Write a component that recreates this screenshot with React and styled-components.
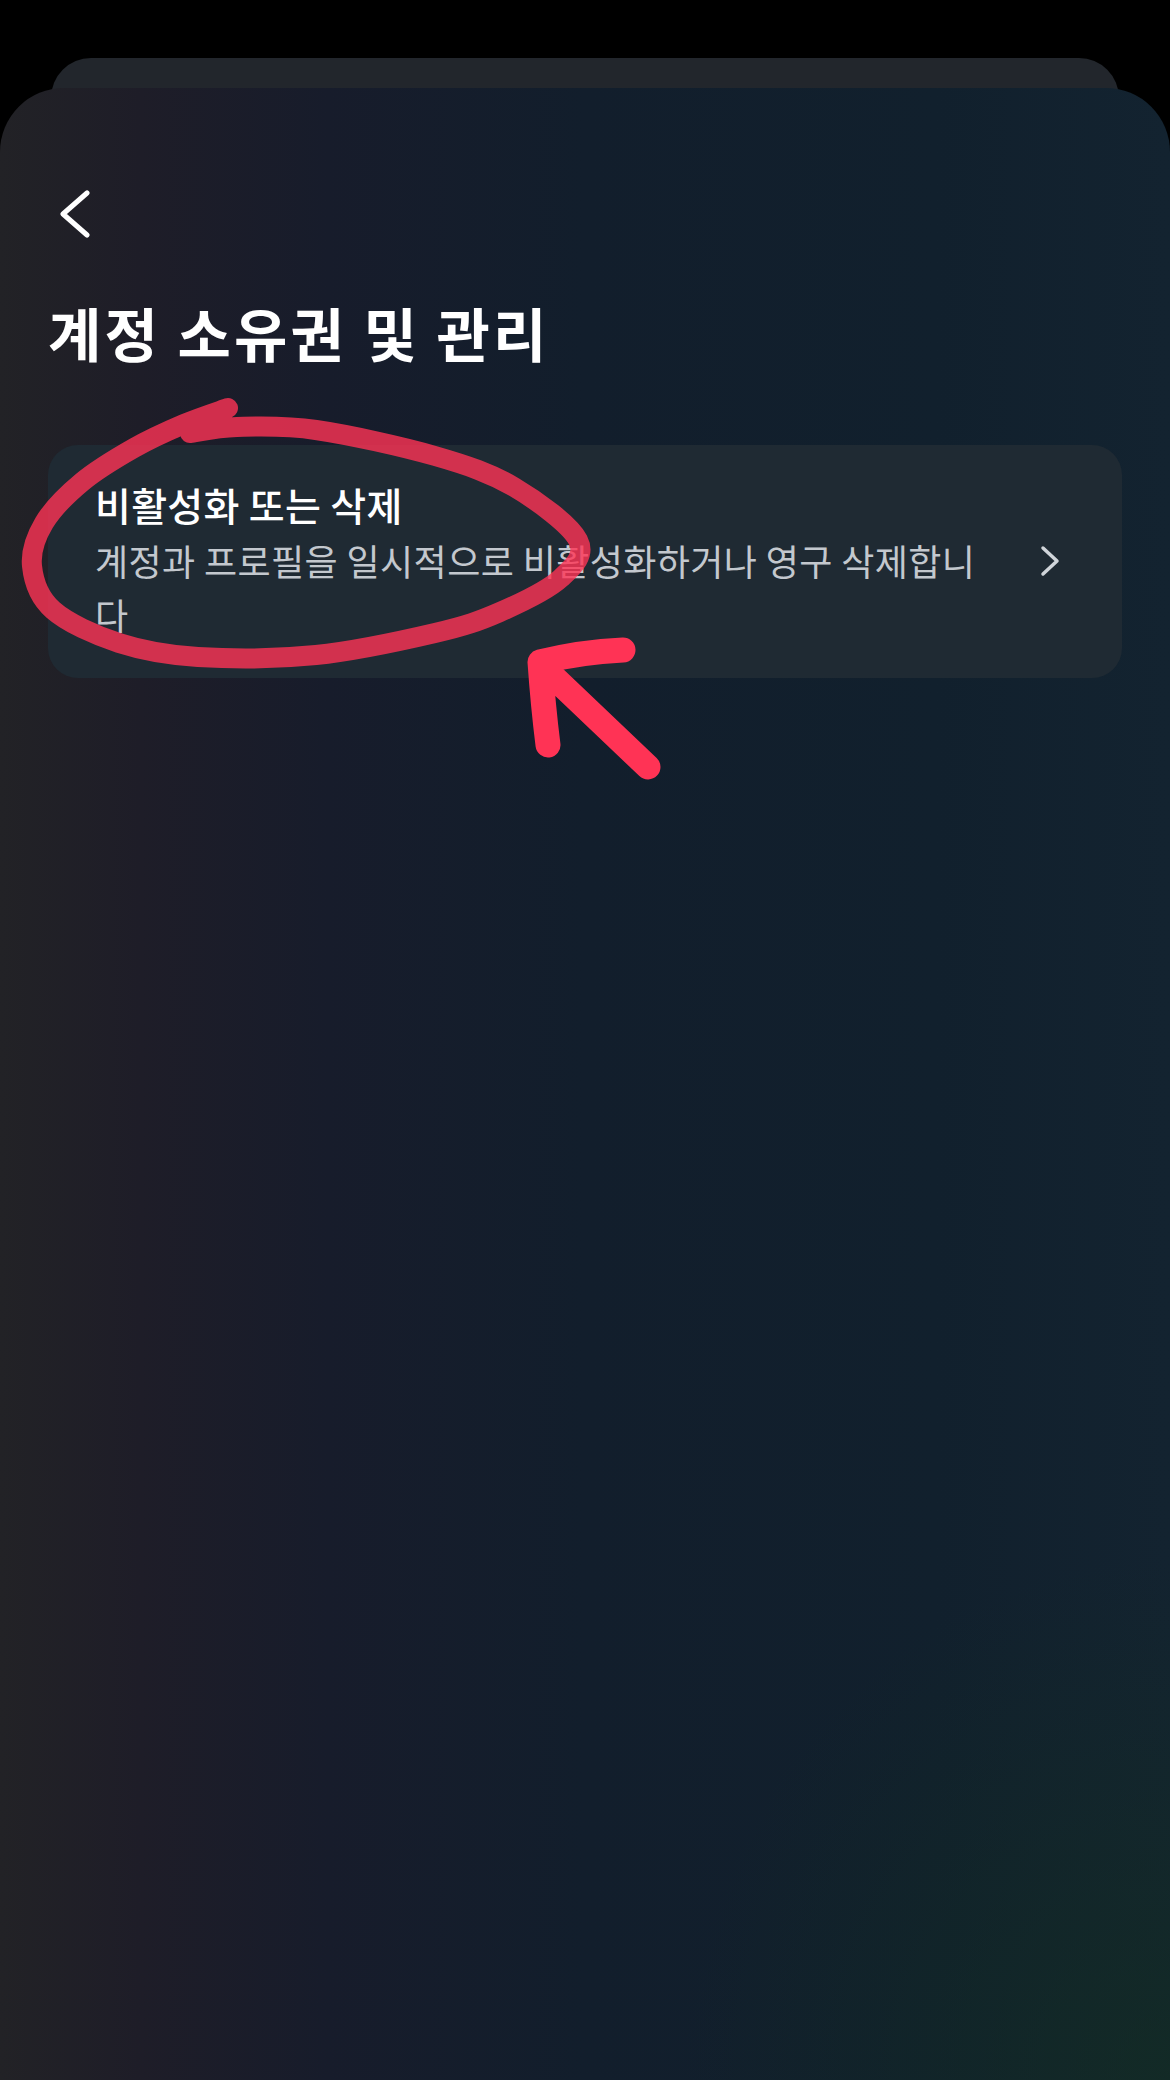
import React from 'react'
import styled, { createGlobalStyle } from 'styled-components'

const GlobalStyle = createGlobalStyle`
  html, body {
    margin: 0;
    padding: 0;
    background: #000;
  }
  body {
    font-family: "Noto Sans CJK KR", "Noto Sans", sans-serif;
    -webkit-font-smoothing: antialiased;
  }
  * { box-sizing: border-box; }
`

// hand-drawn circle around the card title, points along the pen line
const loopPoints = [
  [190, 433], [237, 427], [316, 430], [435, 456], [514, 487], [578, 540],
  [561, 578], [500, 612], [435, 633], [316, 655], [198, 657], [119, 643],
  [53, 610], [32, 566], [44, 523], [82, 482], [134, 448], [184, 424], [228, 408],
]

const smoothPath = (pts) => {
  let d = `M ${pts[0][0]} ${pts[0][1]}`
  for (let i = 0; i < pts.length - 1; i++) {
    const p0 = pts[i - 1] || pts[i]
    const p1 = pts[i]
    const p2 = pts[i + 1]
    const p3 = pts[i + 2] || p2
    const c1 = [p1[0] + (p2[0] - p0[0]) / 6, p1[1] + (p2[1] - p0[1]) / 6]
    const c2 = [p2[0] - (p3[0] - p1[0]) / 6, p2[1] - (p3[1] - p1[1]) / 6]
    d += ` C ${c1[0]} ${c1[1]}, ${c2[0]} ${c2[1]}, ${p2[0]} ${p2[1]}`
  }
  return d
}

export default function App() {
  return (
    <Page>
      <GlobalStyle />
      <BackSheet />
      <FrontSheet>
        <BackButton aria-label="뒤로">
          <svg width="34" height="50" viewBox="0 0 34 50">
            <polyline points="31,4 7,25 31,46" fill="none" stroke="#fff" strokeWidth="5" strokeLinecap="round" strokeLinejoin="round" />
          </svg>
        </BackButton>
        <Title>계정 소유권 및 관리</Title>
        <Card>
          <CardText>
            <CardTitle>비활성화 또는 삭제</CardTitle>
            <CardDesc>계정과 프로필을 일시적으로 비활성화하거나 영구 삭제합니다</CardDesc>
          </CardText>
          <svg width="20" height="32" viewBox="0 0 20 32">
            <polyline points="3,3 17,16 3,29" fill="none" stroke="#d0d5da" strokeWidth="3.5" strokeLinecap="round" strokeLinejoin="round" />
          </svg>
        </Card>
      </FrontSheet>

      <Markup viewBox="0 0 1170 800">
        <path d={smoothPath(loopPoints)} fill="none" stroke="#ff3355" strokeOpacity="0.8" strokeWidth="20" strokeLinecap="round" strokeLinejoin="round" />
        <path d="M 548 745 Q 543 705 540 662 Q 580 652 623 650 M 543 667 L 648 767" fill="none" stroke="#ff3355" strokeWidth="25" strokeLinecap="round" strokeLinejoin="round" />
      </Markup>
    </Page>
  )
}

const Page = styled.div`
  position: relative;
  min-height: 2080px;
  padding-top: 58px;
  background: #000;
  overflow: hidden;
`

const BackSheet = styled.div`
  height: 60px;
  margin: 0 51px -30px;
  border-radius: 40px 40px 0 0;
  background: #22262c;
`

const FrontSheet = styled.div`
  position: relative;
  min-height: 1992px;
  padding: 101px 48px 0;
  border-radius: 64px 64px 0 0;
  background:
    radial-gradient(ellipse 55% 35% at 100% 100%, rgba(18, 48, 30, 0.55), transparent 75%),
    linear-gradient(90deg, #222226 0%, #1e1d28 12%, #171c2b 28%, #121e2c 50%, #11202d 80%, #132330 100%);
`

const BackButton = styled.div`
  width: 34px;
  height: 50px;
  margin-left: 8px;
  svg { display: block; }
`

const Title = styled.h1`
  margin: 58px 0 0;
  font-size: 58px;
  line-height: 70px;
  font-weight: 700;
  letter-spacing: 3.2px;
  color: #fff;
`

const Card = styled.div`
  margin-top: 78px;
  display: grid;
  grid-template-columns: 1fr 20px;
  column-gap: 53px;
  align-items: center;
  padding: 35px 62px 37px 47px;
  border-radius: 30px;
  background: #1f2a33;
  svg { display: block; }
`

const CardText = styled.div`
  display: flex;
  flex-direction: column;
`

const CardTitle = styled.div`
  font-size: 39px;
  line-height: 48px;
  font-weight: 500;
  letter-spacing: 0.3px;
  color: #fff;
`

const CardDesc = styled.div`
  margin-top: 5px;
  font-size: 36px;
  line-height: 54px;
  letter-spacing: 0.4px;
  color: #c3c8ce;
`

const Markup = styled.svg`
  position: absolute;
  top: 0;
  left: 0;
  width: 1170px;
  height: 800px;
  pointer-events: none;
`
